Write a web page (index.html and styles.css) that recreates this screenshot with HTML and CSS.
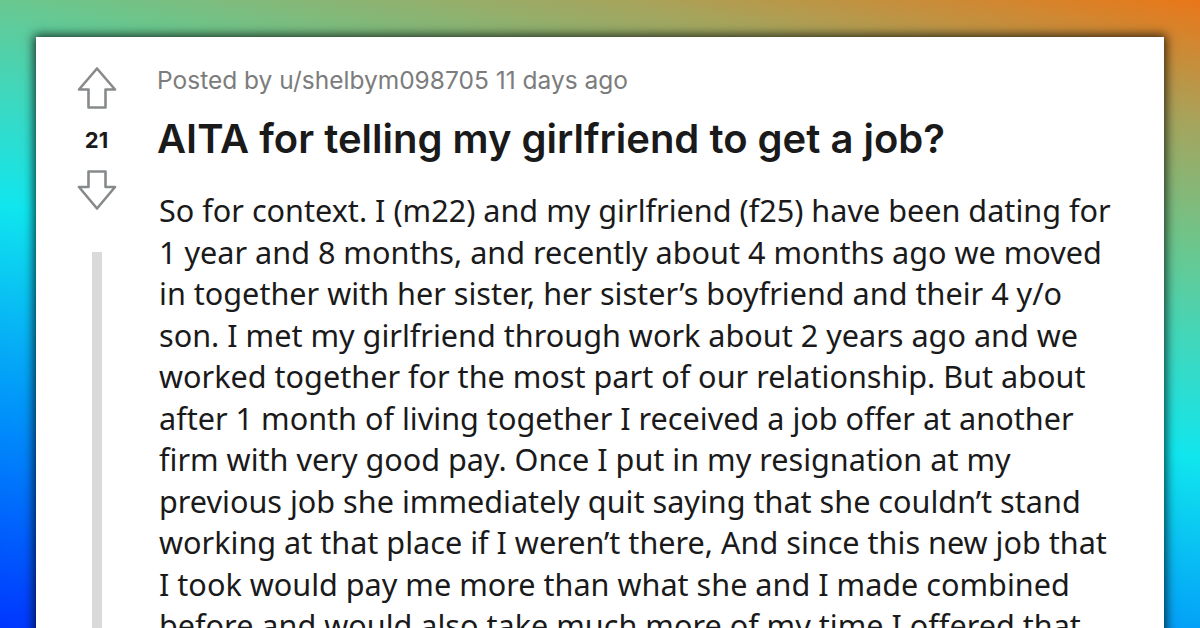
FILE: index.html
```html
<!DOCTYPE html>
<html lang="en">
<head>
<meta charset="utf-8">
<title>AITA for telling my girlfriend to get a job?</title>
<link rel="stylesheet" href="styles.css">
</head>
<body>
<div class="stage">
  <article class="card">
    <aside class="votes">
      <svg class="arrow" width="40" height="42" viewBox="0 0 40 42" aria-label="Upvote">
        <path d="M20 1.5 L38 22.5 H28.5 V40.5 H11.5 V22.5 H2 Z"/>
      </svg>
      <div class="score">21</div>
      <svg class="arrow down" width="40" height="40" viewBox="0 0 40 40" aria-label="Downvote">
        <path d="M11.5 1.5 H28.5 V17 H38 L20 38.5 L2 17 H11.5 Z"/>
      </svg>
      <div class="thread-line"></div>
    </aside>
    <div class="post">
      <div class="meta">Posted by u/shelbym098705 11 days ago</div>
      <h1 class="title">AITA for telling my girlfriend to get a job?</h1>
      <p class="body">So for context. I (m22) and my girlfriend (f25) have been dating for<br>1 year and 8 months, and recently about 4 months ago we moved<br>in together with her sister, her sister’s boyfriend and their 4 y/o<br>son. I met my girlfriend through work about 2 years ago and we<br>worked together for the most part of our relationship. But about<br>after 1 month of living together I received a job offer at another<br>firm with very good pay. Once I put in my resignation at my<br>previous job she immediately quit saying that she couldn’t stand<br>working at that place if I weren’t there, And since this new job that<br>I took would pay me more than what she and I made combined<br>before and would also take much more of my time I offered that</p>
    </div>
  </article>
</div>
</body>
</html>
```

FILE: styles.css
```css
html, body {
  margin: 0;
  padding: 0;
}
body {
  width: 1200px;
  height: 628px;
  overflow: hidden;
  background: linear-gradient(12deg, #0036ff 0%, #0090fa 24%, #10e6ee 48%, #44d6b8 62%, #6cc68c 72%, #a6a45c 86%, #ea7618 100%);
}
.stage {
  height: 628px;
  padding: 37px 36px 0 36px;
  box-sizing: border-box;
}
.card {
  background: #fff;
  height: 640px;
  display: flex;
  box-shadow: 0 0 10px 2px rgba(0, 0, 0, 0.75);
}
.votes {
  width: 121px;
  flex: none;
  display: flex;
  flex-direction: column;
  align-items: center;
  padding-top: 30px;
}
.arrow {
  display: block;
  fill: none;
  stroke: #878a8c;
  stroke-width: 2.6;
  stroke-linejoin: round;
}
.score {
  font-family: "Inter", "Liberation Sans", sans-serif;
  font-weight: 700;
  font-size: 22px;
  line-height: 24px;
  color: #1a1a1b;
  margin-top: 19px;
  margin-bottom: 18px;
}
.thread-line {
  width: 10px;
  flex: 1;
  background: #dadada;
  margin-top: 42px;
}
.post {
  flex: 1;
  padding-top: 28px;
}
.meta {
  font-family: "Inter", "Liberation Sans", sans-serif;
  font-size: 24.5px;
  line-height: 30px;
  color: #7c7c7c;
}
.title {
  margin: 21px 0 0 0;
  font-family: "Inter", "Liberation Sans", sans-serif;
  font-weight: 600;
  font-size: 40px;
  line-height: 46px;
  color: #1a1a1b;
}
.body {
  margin: 28px 0 0 2px;
  font-family: "Noto Sans", "Open Sans", sans-serif;
  font-size: 30.6px;
  line-height: 41.5px;
  color: #1a1a1b;
  white-space: nowrap;
}
```
